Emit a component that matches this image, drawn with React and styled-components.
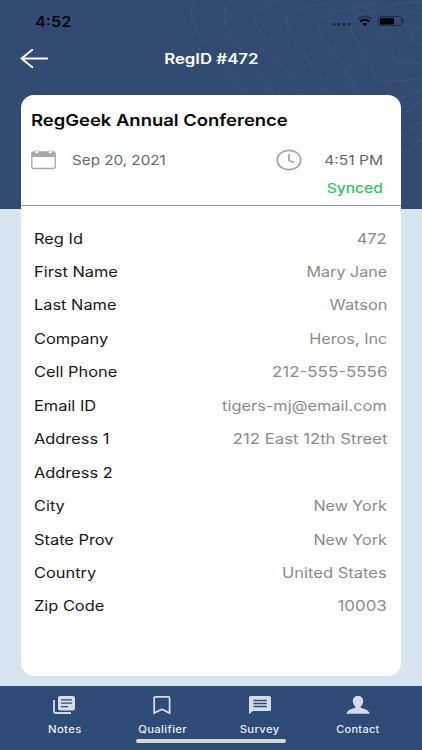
import React from 'react'
import styled, { createGlobalStyle } from 'styled-components'

const GlobalStyle = createGlobalStyle`
  * {
    box-sizing: border-box;
  }
  body {
    margin: 0;
    font-family: Inter, 'Liberation Sans', sans-serif;
  }
`

const Screen = styled.div`
  position: relative;
  display: flex;
  flex-direction: column;
  width: 422px;
  height: 750px;
  overflow: hidden;
  background: linear-gradient(to bottom, #334b73 209px, #d7e5ee 209px);
`

const Contours = styled.svg`
  position: absolute;
  top: 0;
  right: 0;
  fill: none;
  stroke: #3e5680;
  stroke-width: 1;
`

/* Inter drawn wide, anchored on the side the text is aligned to */
const Wide = styled.span`
  display: inline-block;
  white-space: nowrap;
  transform: scaleX(${props => props.$stretch || 1.2});
  transform-origin: ${props => props.$anchor || 'left'} center;
`

const StatusBar = styled.div`
  position: relative;
  display: flex;
  justify-content: space-between;
  height: 42px;
  padding: 0 18px 0 35px;
  color: #05080e;
  font-size: 14px;
  font-weight: 600;
  line-height: 43px;
  svg {
    margin-top: 14px;
  }
`

const Header = styled.header`
  position: relative;
  display: grid;
  grid-template-columns: 60px 1fr 60px;
  align-items: center;
  height: 33px;
  color: #fff;
  h1 {
    margin: 0;
    text-align: center;
    font-size: 14px;
    font-weight: 600;
  }
  svg {
    margin-left: 20px;
  }
`

const Card = styled.main`
  position: relative;
  height: 581px;
  margin: 20px 21px 10px;
  border-radius: 13px;
  background: #fefefe;
`

const EventInfo = styled.section`
  height: 111px;
  padding: 14px 18px 0 10px;
  border-bottom: 1px solid #96979d;
  h2 {
    margin: 0;
    font-size: 16px;
    font-weight: 600;
    line-height: 22px;
    color: #060606;
  }
`

const When = styled.div`
  display: flex;
  align-items: center;
  height: 26px;
  margin-top: 16px;
  font-size: 13px;
  color: #66666a;
`

const DateText = styled.div`
  flex: 1;
  margin-left: 15px;
`

const TimeText = styled.div`
  width: 81px;
  text-align: right;
`

const Status = styled.div`
  margin-top: 5px;
  text-align: right;
  font-size: 13px;
  font-weight: 500;
  line-height: 20px;
  color: #37c45b;
`

const Fields = styled.dl`
  margin: 0;
  padding: 15.4px 14px 0 13px;
`

const Field = styled.div`
  display: flex;
  justify-content: space-between;
  align-items: center;
  height: 33.44px;
  font-size: 14px;
  dt {
    color: #171717;
  }
  dd {
    margin: 0;
    color: #8b8b8b;
  }
`

const TabBar = styled.nav`
  position: relative;
  display: grid;
  grid-template-columns: repeat(4, 97.7px);
  justify-content: center;
  height: 64px;
  padding-top: 9px;
  background: #2d4b76;
`

const Tab = styled.div`
  display: flex;
  flex-direction: column;
  align-items: center;
  color: #e9edf5;
  font-size: 10px;
  font-weight: 500;
  line-height: 14px;
  letter-spacing: 0.3px;
  svg {
    display: block;
    margin-bottom: 7px;
    color: #d5dbea;
  }
`

const HomeIndicator = styled.div`
  position: absolute;
  left: 136px;
  bottom: 7px;
  width: 150px;
  height: 4px;
  border-radius: 2px;
  background: #d5d8dc;
`

const fields = [
  { label: 'Reg Id', value: '472' },
  { label: 'First Name', value: 'Mary Jane', stretch: 1.15 },
  { label: 'Last Name', value: 'Watson' },
  { label: 'Company', value: 'Heros, Inc', stretch: 1.16 },
  { label: 'Cell Phone', value: '212-555-5556', stretch: 1.21 },
  { label: 'Email ID', value: 'tigers-mj@email.com' },
  { label: 'Address 1', value: '212 East 12th Street', stretch: 1.195 },
  { label: 'Address 2', value: '' },
  { label: 'City', value: 'New York', stretch: 1.15 },
  { label: 'State Prov', value: 'New York', stretch: 1.15 },
  { label: 'Country', value: 'United States', stretch: 1.18 },
  { label: 'Zip Code', value: '10003', stretch: 1.21 },
]

const tabs = [
  {
    label: 'Notes',
    icon: (
      <svg width="24" height="20" viewBox="0 0 24 20">
        <path
          d="M2 5v11.5c0 1 .6 1.5 1.5 1.5H19"
          fill="none"
          stroke="currentColor"
          strokeWidth="1.8"
        />
        <rect x="6" y="1" width="17" height="14.5" rx="2" fill="currentColor" />
        <path d="M9 4.8h11M9 8.2h11M9 11.6h7" stroke="#2d4b76" strokeWidth="1.3" />
      </svg>
    ),
  },
  {
    label: 'Qualifier',
    icon: (
      <svg width="24" height="20" viewBox="0 0 24 20">
        <path
          d="M5.6 1.8h12.8c.7 0 1.2.4 1.2 1.1v15.2L12 14.2l-7.8 3.9V2.9c0-.7.6-1.1 1.4-1.1z"
          fill="none"
          stroke="currentColor"
          strokeWidth="1.8"
        />
      </svg>
    ),
  },
  {
    label: 'Survey',
    icon: (
      <svg width="24" height="20" viewBox="0 0 24 20">
        <path
          d="M2.8 1h18.400c1 0 1.800.7 1.800 1.600v11.800c0 .9-.8 1.600-1.800 1.600H5l-4 3V2.600C1 1.700 1.800 1 2.800 1z"
          fill="currentColor"
        />
        <path d="M5.500 5.600h13.200M5.500 8.500h13.200M5.500 11.400h13.200" stroke="#2d4b76" strokeWidth="1.500" />
      </svg>
    ),
  },
  {
    label: 'Contact',
    stretch: 1.09,
    icon: (
      <svg width="24" height="20" viewBox="0 0 24 20">
        <path
          d="M12 1c3.200 0 5.200 2 5.200 5 0 2.500-1.200 4.300-2.400 5.300v1.600c3.800.7 8.200 2 8.700 5.900H.5c.5-3.900 4.900-5.200 8.700-5.900v-1.600C8 10.300 6.800 8.500 6.800 6c0-3 2-5 5.200-5z"
          fill="currentColor"
        />
      </svg>
    ),
  },
]

const App = () => (
  <Screen>
    <GlobalStyle />
    <Contours width="242" height="209" viewBox="180 0 242 209">
      <path d="M195 0C190 8 190 16 195 26C199 35 205 41 211 48L247 96" />
      <path d="M232 0C223 6 222 17 226 26C234 44 258 69 275 96" />
      <path d="M278 0C262 4 251 12 256 23C264 41 288 69 304 96" />
      <path d="M330 2C315 7 282 7 287 23C291 40 319 72 330 96" />
      <path d="M378 0C371 8 342 8 326 15C316 20 317 31 324 40C335 56 354 76 355 96" />
      <path d="M422 3C398 0 384 10 364 14C352 17 347 22 353 34C361 51 369 60 374 74C377 86 389 81 398 81C407 80 415 80 422 76" />
      <path d="M422 14C412 9 403 16 394 20C383 24 380 27 384 36C388 47 391 53 397 62C405 64 414 61 422 64" />
      <path d="M422 27C413 29 408 32 412 38C414 42 417 43 422 44" />
      <path d="M398 99C406 96 415 94 422 88" />
      <path d="M398 117C408 113 414 105 422 100" />
      <path d="M398 142C407 135 414 127 422 120" />
      <path d="M398 158C407 150 414 145 422 139" />
    </Contours>
    <StatusBar>
      <Wide $stretch={1.16}>4:52</Wide>
      <svg width="74" height="14" viewBox="0 0 74 14">
        <g fill="#1d2c47">
          <circle cx="4" cy="10.300" r="1.500" />
          <circle cx="9" cy="10.300" r="1.500" />
          <circle cx="14" cy="10.300" r="1.500" />
          <circle cx="19" cy="10.300" r="1.500" />
        </g>
        <path d="M28 5.200C31.500 1.700 38.500 1.700 41.500 5.200" fill="none" stroke="#1d2c47" strokeWidth="1.500" />
        <path d="M30.200 7.700C33 5 36.700 5 39.300 7.700" fill="none" stroke="#000" strokeWidth="1.800" />
        <path d="M32.300 9.800c1.500-1.300 3.500-1.300 5 0l-2.500 2.200z" fill="#000" />
        <rect x="48.500" y="2.500" width="23" height="9" rx="2.200" fill="none" stroke="#1d2c47" />
        <rect x="50" y="4" width="14" height="6.500" rx="1" fill="#000" />
        <path d="M73 5.500v3" stroke="#1d2c47" strokeWidth="1.500" />
      </svg>
    </StatusBar>
    <Header>
      <svg width="29" height="20" viewBox="0 0 29 20">
        <path
          d="M27.200 9.500H1.500M12.300 0.800L1.500 9.500l10.800 8.700"
          fill="none"
          stroke="#fff"
          strokeWidth="1.800"
          strokeLinecap="round"
          strokeLinejoin="round"
        />
      </svg>
      <h1>
        <Wide $anchor="center">RegID #472</Wide>
      </h1>
    </Header>
    <Card>
      <EventInfo>
        <h2>
          <Wide $stretch={1.152}>RegGeek Annual Conference</Wide>
        </h2>
        <When>
          <svg width="26" height="20" viewBox="0 0 26 20">
            <rect x=".8" y="2" width="23.500" height="16.500" rx="1.800" fill="none" stroke="#a8a8a8" strokeWidth="1.300" />
            <path d="M.8 7V3.500C.8 2.500 1.500 2 2.500 2h20c1 0 1.800.5 1.800 1.500V7z" fill="#a8a8a8" />
            <ellipse cx="5.800" cy="2" rx="2" ry="1.500" fill="#fefefe" stroke="#a8a8a8" strokeWidth=".6" />
            <ellipse cx="19.300" cy="2" rx="2" ry="1.500" fill="#fefefe" stroke="#a8a8a8" strokeWidth=".6" />
          </svg>
          <DateText>
            <Wide $stretch={1.17}>Sep 20, 2021</Wide>
          </DateText>
          <svg width="26" height="22" viewBox="0 0 26 22">
            <ellipse cx="13" cy="11" rx="11.800" ry="9.700" fill="none" stroke="#a8a8a8" strokeWidth="1.800" />
            <path d="M13 5v6.500l5 1.900" fill="none" stroke="#a8a8a8" strokeWidth="1.800" />
          </svg>
          <TimeText>
            <Wide $anchor="right">4:51 PM</Wide>
          </TimeText>
        </When>
        <Status>
          <Wide $anchor="right">Synced</Wide>
        </Status>
      </EventInfo>
      <Fields>
        {fields.map(({ label, value, stretch }) => (
          <Field key={label}>
            <dt>
              <Wide $stretch={1.17}>{label}</Wide>
            </dt>
            <dd>
              <Wide $anchor="right" $stretch={stretch || 1.17}>
                {value}
              </Wide>
            </dd>
          </Field>
        ))}
      </Fields>
    </Card>
    <TabBar>
      {tabs.map(tab => (
        <Tab key={tab.label}>
          {tab.icon}
          <Wide $anchor="center" $stretch={tab.stretch || 1.13}>
            {tab.label}
          </Wide>
        </Tab>
      ))}
      <HomeIndicator />
    </TabBar>
  </Screen>
)

export default App
